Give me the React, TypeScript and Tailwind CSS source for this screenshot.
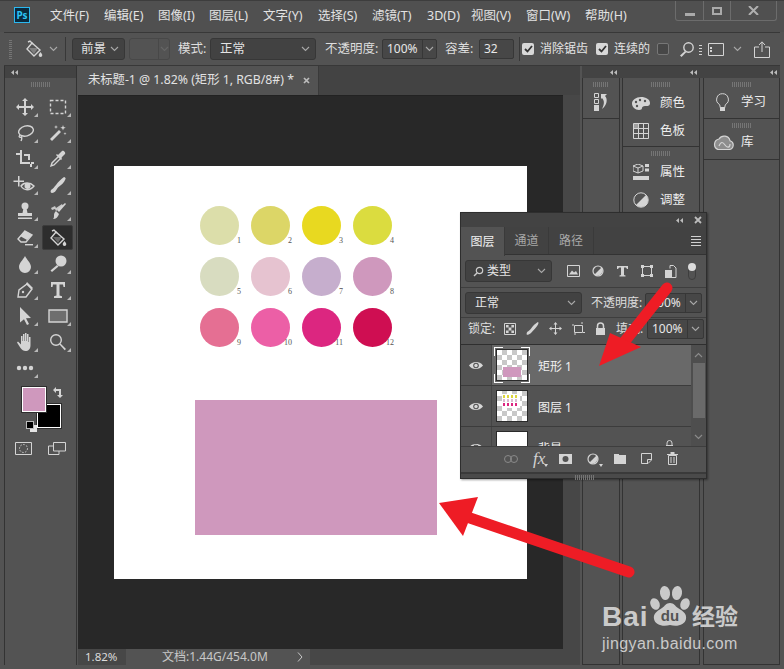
import type { ReactNode } from "react";

const menus = ["文件(F)", "编辑(E)", "图像(I)", "图层(L)", "文字(Y)", "选择(S)", "滤镜(T)", "3D(D)", "视图(V)", "窗口(W)", "帮助(H)"];

const swatches = [
  "#dcdeaa", "#dcd667", "#e8d920", "#dbdc3f",
  "#d8dcc0", "#e6c3d0", "#c6aecd", "#cf98bd",
  "#e56f93", "#ec5fa6", "#dc2680", "#cf0e52",
];

const ICON = "#d4d4d4";

const Ico = ({ w = 18, h = 18, vb = "0 0 18 18", children }: { w?: number; h?: number; vb?: string; children: ReactNode }) => (
  <svg width={w} height={h} viewBox={vb} fill={ICON} stroke="none" className="block shrink-0">
    {children}
  </svg>
);

const line = { fill: "none", stroke: ICON, strokeWidth: 1.4 };

const Bucket = ({ s = 18 }: { s?: number }) => (
  <Ico w={s} h={s}>
    <path d="M3 2l2-1 3 3" {...line} />
    <path d="M7 3l8 7-6 6-7-7z" {...line} />
    <path d="M4 8h9l-4 6z" opacity=".35" />
    <path d="M15.5 12c1 1.500 1.800 2.400 1.800 3.300a1.800 1.800 0 0 1-3.600 0c0-.9.800-1.800 1.800-3.300z" />
  </Ico>
);

const tools: ReactNode[] = [
  <Ico><path d="M9 0l3 3h-2v5h5V6l3 3-3 3v-2h-5v5h2l-3 3-3-3h2v-5H3v2L0 9l3-3v2h5V3H6z" /></Ico>,
  <Ico><path d="M1.500 2.500h15v13h-15z" fill="none" stroke={ICON} strokeWidth="1.4" strokeDasharray="3 2" /></Ico>,
  <Ico><ellipse cx="10" cy="7" rx="7.500" ry="5" transform="rotate(-15 10 7)" {...line} /><path d="M4 11c-2 2 0 3 1 2s1 2 0 4" {...line} /></Ico>,
  <Ico><path d="M2 16L11 7l2 2-9 9z" transform="translate(-1 -1)" /><path d="M14 1l.7 2 2 .7-2 .7-.7 2-.7-2-2-.7 2-.7zM7 1l.5 1.500L9 3l-1.500.5L7 5l-.5-1.500L5 3l1.500-.5zM16 8l.4 1.200 1.200.4-1.200.4-.4 1.200-.4-1.200-1.200-.4 1.200-.4z" /></Ico>,
  <Ico><path d="M0 3h4V0h2v12h8v2H4V5H0zM8 4h6v6h-2V6H8zM14 14h2v3h-2zM15 12h3v2h-3z" /></Ico>,
  <Ico><path d="M2 16l1-3 7-7 2 2-7 7z" fill="none" stroke={ICON} strokeWidth="1.400" /><path d="M9 5l4-4c1.500-1 4 1.500 3 3l-4 4 1 1-1 1-5-5 1-1z" /></Ico>,
  <Ico w={24} vb="0 0 24 18"><path d="M5 0h1.500v4.500H11V6H6.500v4.500H5V6H.5V4.500H5z" /><path d="M8 10c3-4 9-4 13 0-4 5-10 5-13 0z" {...line} /><circle cx="14.500" cy="10" r="3" /></Ico>,
  <Ico><path d="M3 17c-1 0-2-1-1-3 2-1 3-3 5-5 2-3 5-6 8-8 1 0 2 1 1.500 2-1 3-4 6-7 8-2 2-3 6-6.500 6z" /></Ico>,
  <Ico><circle cx="9" cy="4" r="3.500" /><path d="M7.500 6h3l1 5h4.500v3H2v-3h4.500zM2 15.500h14V17H2z" /></Ico>,
  <Ico><path d="M2 6l4-2 1 2 6-4 1 2-7 5-1-2-3 1z" opacity=".9" /><path d="M16 1l1 1-7 8-2-2zM7 9l3 3c-1 3-3 5-6 5 1-1 1-2 1-4 0-2 1-3 2-4z" /></Ico>,
  <Ico><path d="M9 2l7 4-6 7H5L2 10z" fill="none" stroke={ICON} strokeWidth="1.400" /><path d="M9 2l7 4-5 5-7-4z" /><path d="M9 15h8v1.400H9z" /></Ico>,
  <Bucket />,
  <Ico><path d="M9 1c2 4 6 7 6 11a6 6 0 0 1-12 0c0-4 4-7 6-11z" /></Ico>,
  <Ico><circle cx="12" cy="6" r="5.500" /><path d="M8 10l1.500 1.500L3 17l-1.500-1.500z" /></Ico>,
  <Ico><path d="M2 16l1-7 8-6 5 5-6 8z" {...line} /><path d="M11 1l6 6-2 1-5-5z" /><circle cx="7" cy="11" r="1.200" /></Ico>,
  <Ico><path d="M2 1h14v5h-1.500L14 3.500h-3.500v11l2.500.8V17H5v-1.700l2.500-.8v-11H4L3.500 6H2z" /></Ico>,
  <Ico><path d="M4 0l11 11-5 .3 3 5.700-2 1-3-5.700L4 15.500z" /></Ico>,
  <Ico w={20} h={14} vb="0 0 20 14"><path d="M1 1h18v12H1z" fill="#6e6e6e" stroke={ICON} strokeWidth="1.400" /></Ico>,
  <Ico><path d="M7 1h1.500v7H9V0h1.500v8h.5V1h1.500v8h.5V4h1.500v8c0 4-2 6-5 6-2 0-3.500-1-5-3L1 9.500l1-1 3 3V3h1.500v5H7z" /></Ico>,
  <Ico><circle cx="7" cy="7" r="5.300" {...line} /><path d="M10.500 11.500l1-1 5.500 5.500-1.300 1.300z" /></Ico>,
  <Ico><circle cx="3" cy="9" r="2.200" /><circle cx="9" cy="9" r="2.200" /><circle cx="15" cy="9" r="2.200" /></Ico>,
];

const Grip = ({ className = "w-[20px]" }: { className?: string }) => (
  <div className={"h-[5px] bg-[repeating-linear-gradient(90deg,#757575_0_1px,transparent_1px_2px)] " + className} />
);

const Chevron = ({ c = "#a8a8a8" }: { c?: string }) => (
  <svg width="9" height="6" viewBox="0 0 9 6" className="shrink-0"><path d="M1 1l3.500 3.500L8 1" fill="none" stroke={c} strokeWidth="1.100" /></svg>
);

const DoubleArrow = () => (
  <svg width="7" height="5" viewBox="0 0 7 5"><path d="M3 0v5L0 2.500zM7 0v5L4 2.500z" fill="#bcbcbc" /></svg>
);

const Select = ({ className, label }: { className: string; label: ReactNode }) => (
  <div className={"h-[22px] shrink-0 rounded-[3px] border border-[#373737] bg-[#424242] flex items-center justify-between pr-[5px] text-[#e4e4e4] " + className}>
    <span className="flex items-center">{label}</span>
    <Chevron />
  </div>
);

const Percent = ({ className = "w-[57px]" }: { className?: string }) => (
  <div className={"h-[20px] shrink-0 rounded-[2px] border border-[#373737] bg-[#474747] flex items-center text-[#e8e8e8] " + className}>
    <span className="pl-[4px] w-[39px] text-[12px]">100%</span>
    <div className="flex-1 h-full border-l border-[#373737] flex items-center justify-center"><Chevron /></div>
  </div>
);

const Check = ({ on = true, className }: { on?: boolean; className: string }) => (
  <div className={(on ? "w-[12px] h-[12px] shrink-0 rounded-[2px] bg-[#d8d8d8] flex items-center justify-center " : "w-[12px] h-[12px] shrink-0 rounded-[2px] border border-[#777] bg-[#474747] ") + className}>
    {on && <svg width="9" height="8" viewBox="0 0 9 8"><path d="M1 4l2.500 2.500L8 1" fill="none" stroke="#333" strokeWidth="1.800" /></svg>}
  </div>
);

const Eye = () => (
  <svg width="14" height="9" viewBox="0 0 14 9"><path d="M0 4.500C3 .5 10 -.5 14 4.500 10 9.500 3 9 0 4.500z" fill="#d8d8d8" /><circle cx="7" cy="4.500" r="2.800" fill="#535353" /><circle cx="7" cy="4.500" r="1.700" fill="#d8d8d8" /></svg>
);

const Thumb = ({ children }: { children?: ReactNode }) => (
  <div className="relative w-[32px] h-[32px] border border-[#2a2a2a] bg-[conic-gradient(#c8c8c8_25%,#ffffff_0_50%,#c8c8c8_0_75%,#ffffff_0)] bg-[length:10px_10px]">
    {children}
  </div>
);

const PanelItem = ({ icon, label }: { icon: ReactNode; label: string }) => (
  <div className="flex items-center h-[28px] text-[#ededed]">
    <div className="w-[36px] flex justify-center">{icon}</div>
    <span className="text-[12.500px] ml-[1px]">{label}</span>
  </div>
);

const Card = ({ grip = "w-[20px]", className = "", children }: { grip?: string; className?: string; children?: ReactNode }) => (
  <div className={"border-b border-[#333] " + className}>
    <div className="flex justify-center pt-[4px]"><Grip className={grip} /></div>
    {children}
  </div>
);

const LayerRow = ({ active, name, thumb, right }: { active?: boolean; name: string; thumb: ReactNode; right?: ReactNode }) => (
  <div className="flex h-[41px] border-b border-[#3c3c3c]">
    <div className="w-[31px] shrink-0 border-r border-[#454545] flex items-center justify-center"><Eye /></div>
    <div className={active ? "flex-1 flex items-center bg-[#696969]" : "flex-1 flex items-center"}>
      <div className="relative ml-[4px] mr-[10px]">
        {thumb}
        {active && (
          <>
            <div className="absolute -left-[2px] -top-[2px] w-[9px] h-[9px] border-l border-t border-white" />
            <div className="absolute -right-[2px] -top-[2px] w-[9px] h-[9px] border-r border-t border-white" />
            <div className="absolute -left-[2px] -bottom-[2px] w-[9px] h-[9px] border-l border-b border-white" />
            <div className="absolute -right-[2px] -bottom-[2px] w-[9px] h-[9px] border-r border-b border-white" />
          </>
        )}
      </div>
      <span className="text-[12px] pt-[3px] text-[#f0f0f0]">{name}</span>
      {right}
    </div>
  </div>
);

const LayersPanel = () => (
  <div className="absolute left-[460px] top-[212px] w-[247px] h-[267px] bg-[#535353] border border-[#2e2e2e] flex flex-col text-[12px] shadow-[1px_1px_2px_rgba(0,0,0,0.4)]">
    <div className="h-[14px] shrink-0 bg-[#434343] flex items-center justify-end gap-[11px] pr-[4px]">
      <DoubleArrow />
      <svg width="8" height="8" viewBox="0 0 8 8"><path d="M1 1l6 6M7 1L1 7" stroke="#bcbcbc" strokeWidth="1.800" /></svg>
    </div>
    <div className="h-[28px] shrink-0 bg-[#424242] flex items-stretch border-b border-[#333] relative">
      <div className="w-[44px] bg-[#535353] flex items-center justify-center text-[#f0f0f0] h-[29px] border-r border-[#3a3a3a]">图层</div>
      <div className="w-[44px] flex items-center justify-center text-[#a8a8a8] border-r border-[#3a3a3a]">通道</div>
      <div className="w-[45px] flex items-center justify-center text-[#a8a8a8] border-r border-[#3a3a3a]">路径</div>
      <div className="ml-auto mr-[5px] flex flex-col justify-center gap-[2px]">
        <div className="w-[10px] h-px bg-[#d0d0d0]" /><div className="w-[10px] h-px bg-[#d0d0d0]" /><div className="w-[10px] h-px bg-[#d0d0d0]" /><div className="w-[10px] h-px bg-[#d0d0d0]" />
      </div>
    </div>
    <div className="flex items-center h-[33px] shrink-0 pl-[4px] border-b border-[#3e3e3e]">
      <Select
        className="w-[87px] pl-[7px]"
        label={
          <>
            <svg width="11" height="11" viewBox="0 0 11 11" className="mr-[3px]"><circle cx="6.500" cy="4.500" r="3.200" fill="none" stroke="#ccc" strokeWidth="1.200" /><path d="M4 7L1 10" stroke="#ccc" strokeWidth="1.500" /></svg>
            类型
          </>
        }
      />
      <div className="flex items-center ml-[15px] gap-[12px]">
        <Ico w={13} h={12} vb="0 0 13 12"><path d="M.5.5h12v11H.5z" fill="none" stroke={ICON} /><path d="M2 9.500l3-4 2 2 2-1.500 2 3.500z" /></Ico>
        <Ico w={12} h={12} vb="0 0 12 12"><circle cx="6" cy="6" r="5" fill="none" stroke={ICON} strokeWidth="1.200" /><path d="M9.500 2.500a5 5 0 0 1-7 7z" /></Ico>
        <Ico w={13} h={12} vb="0 0 13 12"><path d="M1 1h11v3h-1l-1-1.500H8V10l1.500.5v1h-6v-1L5 10V2.500H3L2 4H1z" /></Ico>
        <Ico w={12} h={12} vb="0 0 12 12"><path d="M1.500 1.500h9v9h-9z" fill="none" stroke={ICON} /><path d="M0 0h3v3H0zM9 0h3v3H9zM0 9h3v3H0zM9 9h3v3H9z" /></Ico>
        <Ico w={12} h={13} vb="0 0 12 13"><path d="M5 3.500V.5h3.500L11 3v9.500H6" fill="none" stroke={ICON} /><path d="M0 5h7v8H0z" /></Ico>
      </div>
      <div className="ml-[11px] w-[8px] h-[17px] rounded-full border border-[#3e3e3e] relative">
        <div className="absolute -left-[1px] -top-[1px] w-[8px] h-[8px] rounded-full bg-[#dcdcdc]" />
      </div>
    </div>
    <div className="flex items-center h-[29px] shrink-0 pl-[4px]">
      <Select className="w-[117px] pl-[9px]" label="正常" />
      <span className="ml-[9px] text-[#dedede]">不透明度:</span>
      <div className="ml-[3px]"><Percent /></div>
    </div>
    <div className="flex items-center h-[28px] shrink-0 pl-[7px] pb-[5px] border-t border-[#3e3e3e] border-b-[#2f2f2f] border-b text-[#dedede]">
      <span className="w-[30px]">锁定:</span>
      <div className="flex items-center ml-[6px] gap-[10px] w-[112px]">
        <Ico w={12} h={12} vb="0 0 12 12"><path d="M.5.500h11v11H.5z" fill="none" stroke={ICON} /><path d="M2 2h2.600v2.600H2zM7.400 2H10v2.600H7.400zM4.600 4.600h2.800v2.800H4.600zM2 7.400h2.600V10H2zM7.400 7.400H10V10H7.400z" /></Ico>
        <Ico w={13} h={13} vb="0 0 13 13"><path d="M.8 12.800c-.5-1.500 0-3 1.500-3.500 1.700-1 2.700-3 4.700-5.300 2-2 4-3.500 5-4 .7.5.5 1.500 0 2.500-1 2-3 4-4.500 5.800-2 2-3 4.500-6.700 4.500z" /></Ico>
        <Ico w={13} h={13} vb="0 0 13 13"><path d="M6.500 0l2 2.500H7V6h3.500V4.500l2.500 2-2.500 2V7H7v3.500h1.500l-2 2.500-2-2.500H6V7H2.500v1.500L0 6.500l2.500-2V6H6V2.500H4.500z" /></Ico>
        <Ico w={13} h={13} vb="0 0 13 13"><path d="M2.500 3.500h8v7h-8z" fill="none" stroke={ICON} /><path d="M0 3h2M11 10.500h2M10 0v2M3 11v2" stroke={ICON} /></Ico>
        <Ico w={11} h={13} vb="0 0 11 13"><path d="M2.500 6V4a3 3 0 0 1 6 0v2" fill="none" stroke={ICON} strokeWidth="1.500" /><path d="M1 6h9v7H1z" /></Ico>
      </div>
      <span className="w-[31px]">填充:</span>
      <Percent />
    </div>
    <div className="flex flex-1 min-h-0 overflow-hidden">
      <div className="flex-1 min-w-0 overflow-hidden">
        <LayerRow active name="矩形 1" thumb={<Thumb><div className="absolute left-[6px] top-[17px] w-[18px] h-[10px] bg-[#cf98bd]" /></Thumb>} />
        <LayerRow
          name="图层 1"
          thumb={
            <Thumb>
              <div className="absolute left-[5px] top-[3px] w-[18px] h-[14px] bg-white" />
              <div className="absolute left-[6px] top-[4px] w-[15px] h-[3px] bg-[repeating-linear-gradient(90deg,#dcd63f_0_2px,transparent_2px_4px)]" />
              <div className="absolute left-[6px] top-[8px] w-[15px] h-[3px] bg-[repeating-linear-gradient(90deg,#d8bcd0_0_2px,transparent_2px_4px)]" />
              <div className="absolute left-[6px] top-[12px] w-[15px] h-[3px] bg-[repeating-linear-gradient(90deg,#dc2680_0_2px,transparent_2px_4px)]" />
            </Thumb>
          }
        />
        <LayerRow
          name="背景"
          thumb={<div className="w-[32px] h-[32px] border border-[#2a2a2a] bg-white" />}
          right={
            <svg width="9" height="12" viewBox="0 0 9 12" className="ml-auto mr-[17px] mb-[3px]"><path d="M2 5V3a2.500 2.500 0 0 1 5 0v2" fill="none" stroke="#d0d0d0" /><path d="M1 5h7v6H1z" fill="#d0d0d0" /></svg>
          }
        />
      </div>
      <div className="w-[15px] shrink-0 bg-[#4e4e4e] flex flex-col items-center">
        <svg width="9" height="6" viewBox="0 0 9 6" className="mt-[7px] mb-[5px]"><path d="M1 5l3.500-3.500L8 5" fill="none" stroke="#8a8a8a" strokeWidth="1.200" /></svg>
        <div className="w-[12px] h-[55px] bg-[#6a6a6a]" />
        <svg width="9" height="6" viewBox="0 0 9 6" className="mt-[16px]"><path d="M1 1l3.500 3.500L8 1" fill="none" stroke="#8a8a8a" strokeWidth="1.200" /></svg>
      </div>
    </div>
    <div className="h-[26px] shrink-0 bg-[#535353] border-t border-[#3e3e3e] flex items-center pl-[43px] pb-[2px] gap-[15px]">
      <svg width="14" height="8" viewBox="0 0 14 8"><rect x=".5" y=".5" width="7" height="7" rx="3.500" fill="none" stroke="#8a8a8a" /><rect x="6.500" y=".5" width="7" height="7" rx="3.500" fill="none" stroke="#8a8a8a" /></svg>
      <span className="relative w-[11px] text-[17px] italic leading-none text-[#d4d4d4] font-['Liberation_Serif',serif]">
        fx
        <div className="absolute -right-[4px] bottom-0 w-0 h-0 border-x-[2px] border-x-transparent border-t-[3px] border-t-[#d4d4d4]" />
      </span>
      <Ico w={13} h={10} vb="0 0 13 10"><path d="M0 0h13v10H0z" /><circle cx="6.500" cy="5" r="3" fill="#535353" /></Ico>
      <div className="relative">
        <Ico w={12} h={12} vb="0 0 12 12"><circle cx="6" cy="6" r="5" fill="none" stroke={ICON} strokeWidth="1.200" /><path d="M9.500 2.500a5 5 0 0 1-7 7z" /></Ico>
        <div className="absolute -right-[4px] -bottom-[2px] w-0 h-0 border-x-[2px] border-x-transparent border-t-[3px] border-t-[#d4d4d4]" />
      </div>
      <Ico w={12} h={10} vb="0 0 12 10"><path d="M0 0h5v1h7v9H0z" /></Ico>
      <Ico w={11} h={11} vb="0 0 11 11"><path d="M.5.500h10V7L7 10.500H.5z" fill="none" stroke={ICON} /><path d="M6.500 10V6.500H10" fill="none" stroke={ICON} /></Ico>
      <Ico w={11} h={13} vb="0 0 11 13"><path d="M0 2h11v1H0zM3.500 0h4v2h-4z" /><path d="M1.500 3.500h8v9h-8zM4 5v6M7 5v6" fill="none" stroke={ICON} /></Ico>
    </div>
    <div className="h-[6px] shrink-0 border-t-2 border-[#3a3a3a] bg-[#4a4a4a] flex justify-center">
      <div className="ml-[2px] pt-[1px]"><Grip className="w-[19px]" /></div>
    </div>
  </div>
);

const Watermark = () => (
  <div className="absolute left-[602px] top-[585px] w-[142px] text-[#cacaca] font-['Liberation_Sans',sans-serif]">
    <div className="flex items-end h-[44px]">
      <span className="w-[48px] text-[28px] leading-[30px] font-bold tracking-[1px] -mb-[3px]">Bai</span>
      <svg width="42" height="44" viewBox="0 0 42 44" className="shrink-0" fill="#cacaca">
        <ellipse cx="15" cy="8" rx="5" ry="7" transform="rotate(-8 15 8)" />
        <ellipse cx="27" cy="8" rx="5" ry="7" transform="rotate(8 27 8)" />
        <ellipse cx="5" cy="19" rx="4.500" ry="6" transform="rotate(-25 5 19)" />
        <ellipse cx="35" cy="19" rx="4.500" ry="6" transform="rotate(25 35 19)" />
        <path d="M20 18c4 0 5 3 8 5 5 3 9 6 8 11-1 6-9 8-16 6-7 2-15 0-16-6-1-5 3-8 8-11 3-2 4-5 8-5z" />
        <text x="20" y="36" fontSize="15" fontWeight="700" textAnchor="middle" fill="#535353" fontFamily="Liberation Sans">du</text>
      </svg>
      <span className="text-[23px] leading-[30px] font-bold -mb-[1px] font-['Noto_Sans_CJK_SC',sans-serif]">经验</span>
    </div>
    <div className="text-[16px] leading-[20px] mt-[5px] tracking-[0.4px] whitespace-nowrap">jingyan.baidu.com</div>
  </div>
);

const Arrows = () => (
  <svg className="absolute left-0 top-0 pointer-events-none" width="784" height="669" viewBox="0 0 784 669">
    <path d="M667 288L625 341" stroke="#ee1c25" strokeWidth="11" strokeLinecap="round" fill="none" />
    <path d="M599 366L610 333 641 347z" fill="#ee1c25" />
    <path d="M629 572L470 518" stroke="#ee1c25" strokeWidth="11" strokeLinecap="round" fill="none" />
    <path d="M439 503L478 497 463 536z" fill="#ee1c25" />
  </svg>
);

export default function App() {
  return (
    <div className="relative w-[784px] h-[669px] overflow-hidden bg-[#535353] flex flex-col text-[12.500px] leading-none text-[#dcdcdc] font-['Noto_Sans','Noto_Sans_CJK_SC',sans-serif]">
      {/* Title bar */}
      <div className="h-[32px] shrink-0 flex bg-[#505050] border-t border-[#3d3d3d]">
        <div className="ml-[14px] mt-[6px] w-[16px] h-[16px] border border-[#2bb8f0] bg-[#0b2a3d] text-[#2bc4f5] text-[10px] font-bold flex items-center justify-center">Ps</div>
        <div className="ml-[20px] grid grid-cols-[54px_54px_51px_54px_55px_54px_55px_44px_55px_59px_42px] items-center h-[30px] whitespace-nowrap text-[#e2e2e2]">
          {menus.map((m) => (
            <span key={m}>{m}</span>
          ))}
        </div>
        <div className="ml-auto mr-[7px] w-[102px] h-[20px] flex border border-t-0 border-[#6c6c6c] rounded-b-[3px]">
          <div className="w-[28px] flex items-end justify-center pb-[4px] border-r border-[#6c6c6c]"><div className="w-[10px] h-[3px] bg-[#aaa]" /></div>
          <div className="w-[27px] flex items-center justify-center border-r border-[#6c6c6c]"><div className="w-[10px] h-[8px] border-2 border-[#aaa]" /></div>
          <div className="flex-1 flex items-center justify-center">
            <svg width="11" height="9" viewBox="0 0 11 9"><path d="M1 0l9 9M10 0L1 9" stroke="#b0b0b0" strokeWidth="2" /></svg>
          </div>
        </div>
      </div>

      {/* Options bar */}
      <div className="h-[34px] shrink-0 mx-[4px] flex items-center border-y border-[#383838] bg-[#535353] whitespace-nowrap">
        <div className="ml-[5px] w-[3px] h-[20px] bg-[repeating-linear-gradient(0deg,#757575_0_1px,transparent_1px_2px)]" />
        <div className="ml-[13px]"><Bucket /></div>
        <div className="ml-[6px]"><Chevron /></div>
        <div className="ml-[7px] w-px h-[24px] bg-[#383838]" />
        <Select className="w-[53px] ml-[6px] pl-[8px]" label="前景" />
        <div className="ml-[4px] w-[41px] h-[22px] shrink-0 rounded-[3px] border border-[#484848] flex">
          <div className="w-[29px] border-r border-[#484848]" />
          <div className="flex-1 flex items-center justify-center"><Chevron c="#666" /></div>
        </div>
        <span className="ml-[8px] w-[32px] text-[#dedede]">模式:</span>
        <Select className="w-[106px] pl-[9px]" label="正常" />
        <span className="ml-[9px] w-[57px] text-[#dedede]">不透明度:</span>
        <Percent className="w-[55px]" />
        <span className="ml-[8px] w-[34px] text-[#dedede]">容差:</span>
        <div className="w-[35px] h-[20px] shrink-0 rounded-[2px] border border-[#373737] bg-[#474747] pl-[4px] flex items-center text-[12px] text-[#e8e8e8]">32</div>
        <div className="ml-[5px] w-px h-[24px] bg-[#383838]" />
        <Check className="ml-[2px]" />
        <span className="ml-[6px] w-[46px] text-[12px] text-[#e4e4e4]">消除锯齿</span>
        <Check className="ml-[10px]" />
        <span className="ml-[6px] w-[35px] text-[12px] text-[#e4e4e4]">连续的</span>
        <Check on={false} className="ml-[8px]" />
        <div className="ml-[11px]">
          <Ico w={14} h={15} vb="0 0 14 15"><circle cx="8.500" cy="5.500" r="4.700" fill="none" stroke={ICON} strokeWidth="1.400" /><path d="M5 9l1.200 1.200L1.500 15 0 13.500z" /></Ico>
        </div>
        <div className="ml-[5px] h-[12px] w-[3px] bg-[repeating-linear-gradient(0deg,#d0d0d0_0_1px,transparent_1px_3px)]" />
        <div className="ml-[6px]">
          <Ico w={16} h={13} vb="0 0 16 13"><path d="M.5.500h15v12H.5z" fill="none" stroke={ICON} /><path d="M2 4h2v2H2zM2 7h2v2H2z" /></Ico>
        </div>
        <div className="ml-[9px]"><Chevron /></div>
        <div className="ml-[12px]">
          <Ico w={16} h={17} vb="0 0 16 17"><path d="M5 6H.5v10.500h15V6H11" fill="none" stroke={ICON} /><path d="M8 1v10M5 4l3-3.200L11 4" fill="none" stroke={ICON} /></Ico>
        </div>
      </div>

      {/* Workspace */}
      <div className="flex-1 min-h-0 flex pl-[4px] pr-[4px] pb-[4px]">
        {/* Tools */}
        <div className="w-[73px] shrink-0 flex flex-col border-x border-[#333]">
          <div className="h-[12px] bg-[#434343] flex items-center pl-[6px]"><DoubleArrow /></div>
          <div className="flex justify-center pt-[4px] h-[16px]"><Grip className="w-[19px]" /></div>
          <div className="grid grid-cols-[33px_33px] grid-rows-[repeat(11,26.1px)] pl-[3px]">
            {tools.map((t, i) => (
              <div key={i} className={i === 11 ? "relative flex items-center justify-center rounded-[2px] bg-[#2d2d2d] border border-[#3c3c3c] my-[1px] mx-[1px]" : "relative flex items-center justify-center"}>
                {t}
                {i !== 11 && <div className="absolute right-[3px] bottom-[3px] w-0 h-0 border-l-[4px] border-l-transparent border-b-[4px] border-b-[#b8b8b8]" />}
              </div>
            ))}
          </div>
          {/* Colours */}
          <div className="relative ml-[17px] mt-[6px] h-[45px] w-[46px]">
            <div className="absolute left-[15px] top-[17px] w-[24px] h-[24px] bg-black border border-white outline outline-[#2e2e2e]" />
            <div className="absolute left-0 top-0 w-[24px] h-[25px] bg-[#cf98bd] border border-white outline outline-[#2e2e2e]" />
            <svg width="11" height="11" viewBox="0 0 11 11" className="absolute left-[31px] top-0"><path d="M0 3l3-3v2h5v6h2l-3 3-3-3h2V4H3v2z" fill={ICON} /></svg>
            <div className="absolute left-[8px] top-[38px] w-[7px] h-[7px] bg-[#e4e4e4]" />
            <div className="absolute left-[4px] top-[34px] w-[8px] h-[8px] bg-black border border-[#bbb]" />
          </div>
          <div className="flex ml-[10px] mt-[10px] gap-[16px]">
            <svg width="17" height="13" viewBox="0 0 17 13"><path d="M.5.500h16v12H.5z" fill="none" stroke={ICON} /><circle cx="8.500" cy="6.500" r="4" fill="none" stroke={ICON} strokeDasharray="1.500 1.500" /></svg>
            <svg width="18" height="13" viewBox="0 0 18 13"><path d="M5.500.500h12v8.500h-12z" fill="none" stroke={ICON} /><path d="M5.500 4H.5v8.500h10.500V9" fill="none" stroke={ICON} /></svg>
          </div>
        </div>

        {/* Document */}
        <div className="ml-[1px] w-[502px] shrink-0 flex flex-col">
          <div className="h-[29px] shrink-0 bg-[#434343] flex">
            <div className="w-[241px] bg-[#535353] border-r border-[#3a3a3a] flex items-center pl-[10px] whitespace-nowrap text-[12.300px] text-[#e2e2e2]">
              未标题-1 @ 1.82% (矩形 1, RGB/8#) *
              <svg width="7" height="7" viewBox="0 0 7 7" className="ml-[9px]"><path d="M1 1l5 5M6 1L1 6" stroke="#bcbcbc" strokeWidth="1.700" /></svg>
            </div>
          </div>
          <div className="flex-1 min-h-0 flex bg-[#474747]">
            <div className="w-[485px] bg-[#282828] pl-[36px] pt-[70px] border-t border-[#222]">
              <div className="w-[413px] h-[413px] bg-white">
                <div className="pl-[86px] pt-[40px]">
                  <div className="grid grid-cols-[repeat(4,39px)] gap-[12px]">
                    {swatches.map((c, i) => (
                      <div key={c} className="relative w-[39px] h-[39px]">
                        <div className="w-full h-full rounded-full blur-[0.5px]" style={{ background: c }} />
                        <span className="absolute -right-[2px] bottom-0 text-[8px] leading-none text-[#555] font-['Liberation_Serif',serif]">{i + 1}</span>
                      </div>
                    ))}
                  </div>
                </div>
                <div className="ml-[81px] mt-[53px] w-[242px] h-[135px] bg-[#cf98bd]" />
              </div>
            </div>
          </div>
          <div className="h-[16px] shrink-0 flex items-center bg-[#474747] text-[12px] text-[#dcdcdc]">
            <div className="w-[48px] pl-[7px] text-[11.500px]">1.82%</div>
            <div className="w-[184px] h-full bg-[#535353] flex items-center pl-[36px] text-[#c8c8c8]">
              文档:1.44G/454.0M
              <svg width="6" height="10" viewBox="0 0 6 10" className="ml-auto mr-[7px]"><path d="M1 .5L5 5 1 9.500" fill="none" stroke="#c8c8c8" /></svg>
            </div>
          </div>
        </div>

        {/* Collapsed panels */}
        <div className="ml-[2px] flex-1 min-w-0 flex flex-col">
          <div className="h-[12px] shrink-0 bg-[#434343] flex items-center justify-end">
            <div className="flex w-[198px]">
              <div className="w-[38px] flex justify-end pr-[3px]"><DoubleArrow /></div>
              <div className="w-[80px] flex justify-end pr-[3px]"><DoubleArrow /></div>
              <div className="w-[80px] flex justify-end pr-[3px]"><DoubleArrow /></div>
            </div>
          </div>
          <div className="flex-1 min-h-0 flex gap-[2px]">
            <div className="w-[38px] shrink-0 border-x border-b border-[#333]">
              <Card grip="w-[16px]" className="h-[41px]">
                <div className="flex justify-center pt-[6px]">
                  <Ico w={15} h={18} vb="0 0 15 18"><path d="M.5.500h4v4h-4zM.5 6.500h4v4h-4z" fill="none" stroke={ICON} /><path d="M0 12h5v6H0z" /><path d="M7 1h6l-2 2c3 3 2 9-3 13 2-4 3-8 0-11L7 6z" /></Ico>
                </div>
              </Card>
            </div>
            <div className="w-[78px] shrink-0 border-x border-b border-[#333]">
              <Card className="h-[69px]">
                <div className="pt-[2px]">
                  <PanelItem
                    icon={<Ico w={18} h={13} vb="0 0 18 13"><path d="M9 0c5 0 9 2.500 9 6s-3 3-5 3-3 1-3 2-1 2-3 2C3 13 0 10 0 6.500S4 0 9 0z" /><circle cx="4" cy="5" r="1.200" fill="#535353" /><circle cx="8" cy="3" r="1.200" fill="#535353" /><circle cx="13" cy="4" r="1.200" fill="#535353" /><circle cx="5" cy="9" r="1.200" fill="#535353" /></Ico>}
                    label="颜色"
                  />
                  <PanelItem
                    icon={<Ico w={16} h={16} vb="0 0 16 16"><path d="M.5.500h15v15H.5zM5.500.5v15M10.500.5v15M.5 5.500h15M.5 10.500h15" fill="none" stroke={ICON} /><path d="M1 1h4v4H1z" opacity=".6" /></Ico>}
                    label="色板"
                  />
                </div>
              </Card>
              <Card>
                <div className="pt-[2px]">
                  <PanelItem
                    icon={<Ico w={16} h={16} vb="0 0 16 16"><path d="M5 0l5 2v5l-5 2-5-2V2z" fill="none" stroke={ICON} /><path d="M5 4v5M0 2l5 2 5-2" fill="none" stroke={ICON} /><path d="M12 0h4v3h-4zM12 4.500h4v3h-4zM0 12h16v4H0z" /></Ico>}
                    label="属性"
                  />
                  <PanelItem
                    icon={<Ico w={16} h={16} vb="0 0 16 16"><circle cx="8" cy="8" r="7.200" fill="none" stroke={ICON} /><path d="M13 3a7 7 0 0 1-10 10z" /></Ico>}
                    label="调整"
                  />
                </div>
              </Card>
            </div>
            <div className="flex-1 min-w-0 ml-[1px] border-x border-b border-[#333]">
              <Card className="h-[41px]">
                <div className="flex items-center text-[#ededed] pt-[6px]">
                  <div className="w-[37px] flex justify-center">
                    <Ico w={13} h={19} vb="0 0 13 19"><path d="M6.500 .7a5.800 5.800 0 0 0-3 10.800c.6 1 .6 2 .6 3h4.800c0-1 0-2 .6-3a5.800 5.800 0 0 0-3-10.800z" fill="none" stroke={ICON} /><path d="M4 14.500h5V18H4z" /></Ico>
                  </div>
                  <span>学习</span>
                </div>
              </Card>
              <Card className="h-[41px]">
                <div className="flex items-center text-[#ededed] pt-[7px]">
                  <div className="w-[37px] flex justify-center">
                    <Ico w={22} h={15} vb="0 0 22 15"><path d="M6 14.500h11a4.500 4.500 0 0 0 1-8.800A6 6 0 0 0 7 4a5.500 5.500 0 0 0-1 10.500z" fill="#8d8d8d" stroke={ICON} strokeWidth="1.200" /><path d="M7 11c2-5 4-4 6-1s5 3 5-1" fill="none" stroke={ICON} strokeWidth="1.200" /></Ico>
                  </div>
                  <span>库</span>
                </div>
              </Card>
            </div>
          </div>
        </div>
      </div>

      <LayersPanel />
      <Arrows />
      <Watermark />
    </div>
  );
}
